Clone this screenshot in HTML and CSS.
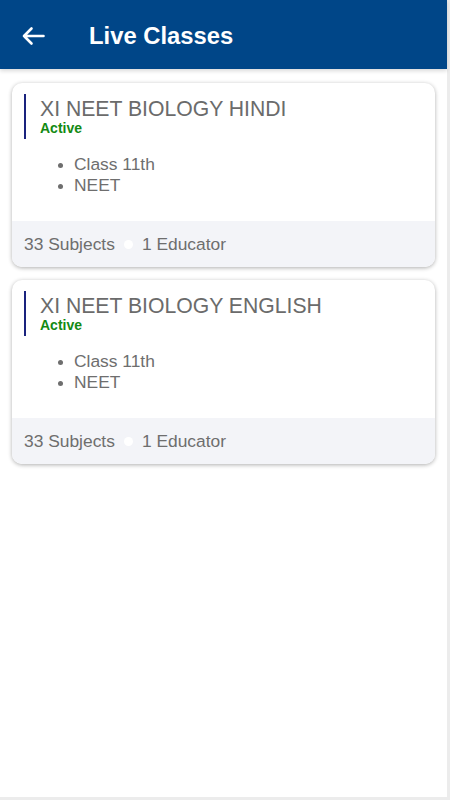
FILE: index.html
```html
<!DOCTYPE html>
<html>
<head>
<meta charset="utf-8">
<link rel="stylesheet" href="styles.css">
</head>
<body>
<div class="frame">
  <header class="appbar">
    <svg class="back" width="24" height="20" viewBox="0 0 24 20"><path d="M22.5 10H3M10.5 2.5L3 10l7.5 7.5" fill="none" stroke="#fff" stroke-width="2.6" stroke-linecap="round" stroke-linejoin="round"/></svg>
    <h1 class="title">Live Classes</h1>
  </header>
  <main class="list">
    <section class="card">
      <div class="card-body">
        <div class="head">
          <div class="name">XI NEET BIOLOGY HINDI</div>
          <div class="status">Active</div>
        </div>
        <ul class="tags">
          <li>Class 11th</li>
          <li>NEET</li>
        </ul>
      </div>
      <div class="card-foot"><span>33 Subjects</span><span class="dot"></span><span>1 Educator</span></div>
    </section>
    <section class="card">
      <div class="card-body">
        <div class="head">
          <div class="name">XI NEET BIOLOGY ENGLISH</div>
          <div class="status">Active</div>
        </div>
        <ul class="tags">
          <li>Class 11th</li>
          <li>NEET</li>
        </ul>
      </div>
      <div class="card-foot"><span>33 Subjects</span><span class="dot"></span><span>1 Educator</span></div>
    </section>
  </main>
</div>
</body>
</html>
```
FILE: styles.css
```css
html, body { margin: 0; padding: 0; }
body { background: #ececec; font-family: "Liberation Sans", Arial, sans-serif; width: 450px; height: 800px; overflow: hidden; }
.frame { width: 447px; height: 797px; background: #fff; }
.appbar { height: 69px; background: #004688; display: flex; align-items: center; box-shadow: 0 2px 4px rgba(0,0,0,0.15); position: relative; }
.back { margin-left: 21px; width: 24px; height: 20px; margin-top: 2px; }
.title { margin: 0 0 0 44px; color: #fff; font-size: 23.8px; font-weight: 700; padding-top: 2px; }
.list { padding: 14px 12px 0 12px; display: flex; flex-direction: column; gap: 13px; }
.card { background: #fff; border-radius: 10px; box-shadow: 0 1px 4px rgba(0,0,0,0.32); overflow: hidden; }
.card-body { padding: 11px 12px 0 12px; height: 138px; box-sizing: border-box; }
.head { border-left: 2px solid #1a237e; padding-left: 14px; padding-bottom: 2px; }
.name { font-size: 21.2px; color: #6b6b6b; line-height: 23px; padding-top: 3px; }
.status { color: #138a13; font-weight: 700; font-size: 14px; line-height: 17px; }
.tags { margin: 15px 0 0 0; padding-left: 50px; font-size: 17.4px; color: #6e6e6e; line-height: 21px; }
.tags li::marker { font-size: 15px; }
.card-foot { background: #f3f4f8; height: 46px; display: flex; align-items: center; padding-left: 12px; font-size: 17.4px; color: #6e6e6e; }
.dot { width: 9px; height: 9px; border-radius: 50%; background: #fff; display: inline-block; margin: 0 9px; }
```
